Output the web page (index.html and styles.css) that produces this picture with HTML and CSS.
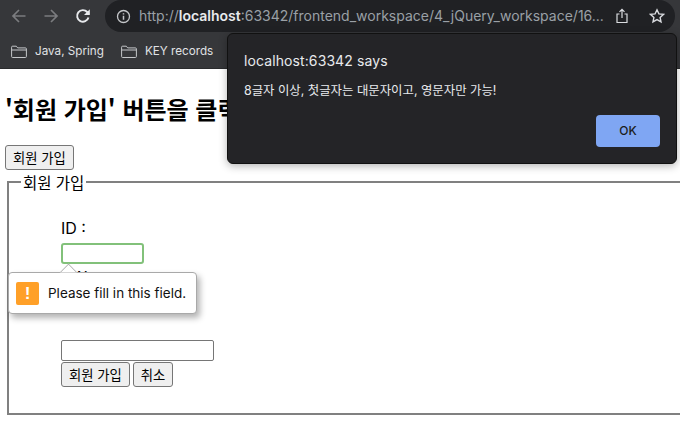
FILE: index.html
```html
<!DOCTYPE html>
<html lang="ko">
<head>
<meta charset="utf-8">
<title>회원 가입</title>
<link rel="stylesheet" href="styles.css">
</head>
<body>
<header class="chrome">
  <div class="toolbar">
    <svg class="nav" width="16" height="16" viewBox="0 0 16 16"><path d="M14.5 8H2M8 2 2 8l6 6" fill="none" stroke="#7b7c7f" stroke-width="1.7"/></svg>
    <svg class="nav" width="16" height="16" viewBox="0 0 16 16"><path d="M1.500 8H14M8 2l6 6-6 6" fill="none" stroke="#7b7c7f" stroke-width="1.7"/></svg>
    <svg class="nav nav-last" width="16" height="16" viewBox="0 0 16 16"><path d="M13.500 9.500A5.800 5.800 0 1 1 12.200 4L14 5.800" fill="none" stroke="#e8eaed" stroke-width="1.900"/><path d="M14.800 1.200V7H9z" fill="#e8eaed"/></svg>
    <div class="omnibox">
      <svg width="15" height="15" viewBox="0 0 15 15"><circle cx="7.500" cy="7.500" r="6" fill="none" stroke="#c4c6c9" stroke-width="1.300"/><path d="M7.500 6.700v4M7.500 4.200v1.400" stroke="#c4c6c9" stroke-width="1.500"/></svg>
      <span class="url">http://<b>localhost</b>:63342/frontend_workspace/4_jQuery_workspace/16...</span>
      <svg class="share" width="14" height="16" viewBox="0 0 14 16"><path d="M4.500 6H2v8.500h10V6H9.500M7 10V1.500M4.500 3.800 7 1.300l2.500 2.500" fill="none" stroke="#dadce0" stroke-width="1.200"/></svg>
      <svg width="16" height="16" viewBox="0 0 16 16"><path d="m8 1.800 1.900 4.100 4.500.5-3.300 3 .9 4.400L8 11.600l-4 2.200.9-4.400-3.300-3 4.500-.5z" fill="none" stroke="#dadce0" stroke-width="1.400"/></svg>
    </div>
  </div>
  <nav class="bookmarks">
    <span class="bookmark">
      <svg width="16" height="13" viewBox="0 0 16 13"><path d="M.6 11.500V2.200q0-1 1-1h3.700l1.400 1.700h7.700q1 0 1 1v7.600q0 1-1 1H1.600q-1 0-1-1zM.6 5h14.800" fill="none" stroke="#c4c6c9"/></svg>
      Java, Spring
    </span>
    <span class="bookmark">
      <svg width="16" height="13" viewBox="0 0 16 13"><path d="M.6 11.500V2.200q0-1 1-1h3.700l1.400 1.700h7.700q1 0 1 1v7.600q0 1-1 1H1.600q-1 0-1-1zM.6 5h14.800" fill="none" stroke="#c4c6c9"/></svg>
      KEY records
    </span>
  </nav>
</header>

<main class="page">
  <h1 class="title">'회원 가입' 버튼을 클릭하세요</h1>
  <button class="btn" type="button">회원 가입</button>
  <fieldset class="form-box">
    <legend class="legend">회원 가입</legend>
    <form class="form">
      <label class="label">ID :</label>
      <input class="field field-id" type="text">
      <label class="label label-pw">PW :</label>
      <input class="field field-last" type="text">
      <div class="actions">
        <button class="btn" type="button">회원 가입</button>
        <button class="btn" type="button">취소</button>
      </div>
    </form>
  </fieldset>
</main>

<div class="bubble">
  <span class="bubble-arrow"></span>
  <span class="bubble-icon">!</span>
  <span class="bubble-text">Please fill in this field.</span>
</div>

<div class="dialog">
  <p class="dialog-title">localhost:63342 says</p>
  <p class="dialog-msg">8글자 이상, 첫글자는 대문자이고, 영문자만 가능!</p>
  <div class="dialog-actions"><button class="ok" type="button">OK</button></div>
</div>
</body>
</html>
```
FILE: styles.css
```css
* { box-sizing: border-box; }
html, body { height: 100%; }
body {
  margin: 0;
  height: 425px;
  overflow: hidden;
  background: #fff;
  color: #000;
  font-family: "Noto Sans CJK KR", "Liberation Sans", sans-serif;
  font-size: 16px;
}
.chrome { background: #36373a; height: 69px; border-bottom: 1px solid #2a2b2d; }
.toolbar { height: 32px; display: flex; align-items: center; padding: 0 0 0 11px; }
.nav { flex: none; margin-right: 16px; }
.nav-last { margin-right: 14px; }
.omnibox {
  flex: 1;
  min-width: 0;
  height: 32px;
  margin-right: 5px;
  background: #202124;
  border-radius: 16px;
  display: flex;
  align-items: center;
  padding: 0 10px 0 11px;
  gap: 8px;
  color: #9aa0a6;
  font: 14px/1 Inter, "Liberation Sans", sans-serif;
  white-space: nowrap;
}
.url { flex: 1; min-width: 0; }
.url b { color: #e8eaed; font-weight: 600; }
.share { margin-right: 12px; }
.bookmarks { height: 36px; display: flex; align-items: center; padding: 3px 0 0 11px; gap: 17px; color: #e0e2e5; font: 11.7px/1 Inter, "Liberation Sans", sans-serif; }
.bookmark { display: flex; align-items: center; gap: 8px; }

.page { padding: 22px 5px 0; }
.title { margin: 0 0 17px; font-size: 24px; line-height: 36px; font-weight: 700; white-space: nowrap; }
.btn {
  height: 25px;
  padding: 0 7px;
  background: #efefef;
  border: 1px solid #767676;
  border-radius: 3px;
  color: #000;
  font: 13.33px/1 "Noto Sans CJK KR", sans-serif;
}
.form-box { display: block; width: 700px; height: 242px; margin: 3px 0 0 2px; padding: 0 12px; border: 2px solid #808080; }
.legend { padding: 0 2px; margin-left: 0; line-height: 18px; font-size: 15.5px; }
.form { display: flex; flex-direction: column; align-items: flex-start; padding: 25px 0 0 40px; }
.label { line-height: 24px; font-family: Inter, "Liberation Sans", sans-serif; }
.field { height: 21px; padding: 1px 2px; border: 1px solid #767676; border-radius: 2px; background: #fff; width: 153px; }
.field-id { width: 83px; margin-top: 3px; border: 2px solid #82c17a; border-radius: 3px; }
.label-pw { margin-top: 1px; }
.field-last { margin-top: 51px; }
.actions { display: flex; gap: 3px; margin-top: 1px; }

.bubble {
  position: absolute;
  left: 8px;
  top: 272px;
  width: 189px;
  height: 42px;
  background: #fff;
  border: 1px solid #a9a9a9;
  border-radius: 4px;
  box-shadow: 3px 4px 6px rgba(0,0,0,.3);
  display: flex;
  align-items: center;
  padding-left: 7px;
  gap: 9px;
  font: 13.5px/1 Inter, "Liberation Sans", sans-serif;
  color: #111;
  white-space: nowrap;
}
.bubble-text { padding-top: 1px; }
.bubble-arrow {
  position: absolute;
  left: 53px;
  top: -7px;
  width: 13px;
  height: 13px;
  background: #fff;
  border-left: 1px solid #a9a9a9;
  border-top: 1px solid #a9a9a9;
  transform: rotate(45deg);
  clip-path: polygon(0 0, 100% 0, 0 100%);
}
.bubble-icon {
  width: 23px;
  height: 23px;
  background: #ffa028;
  border-radius: 2px;
  color: #fff;
  font: 700 17px/23px "Liberation Sans", sans-serif;
  text-align: center;
}

.dialog {
  position: absolute;
  left: 227px;
  top: 33px;
  width: 450px;
  height: 131px;
  padding: 0 16px;
  background: #242427;
  border: 1px solid #111;
  border-radius: 6px;
  box-shadow: 0 2px 8px rgba(0,0,0,.3);
  color: #e8eaed;
}
.dialog-title { margin: 18px 0 0; font: 14px/17px Inter, "Liberation Sans", sans-serif; letter-spacing: .1px; }
.dialog-msg { margin: 13px 0 0; font: 12.4px/18px Inter, "Noto Sans CJK KR", sans-serif; }
.dialog-actions { display: flex; justify-content: flex-end; margin-top: 15px; }
.ok {
  width: 64px;
  height: 32px;
  border: 0;
  border-radius: 4px;
  background: #7fa6f3;
  color: #1c1d20;
  font: 500 12px/1 Inter, "Liberation Sans", sans-serif;
}
```
